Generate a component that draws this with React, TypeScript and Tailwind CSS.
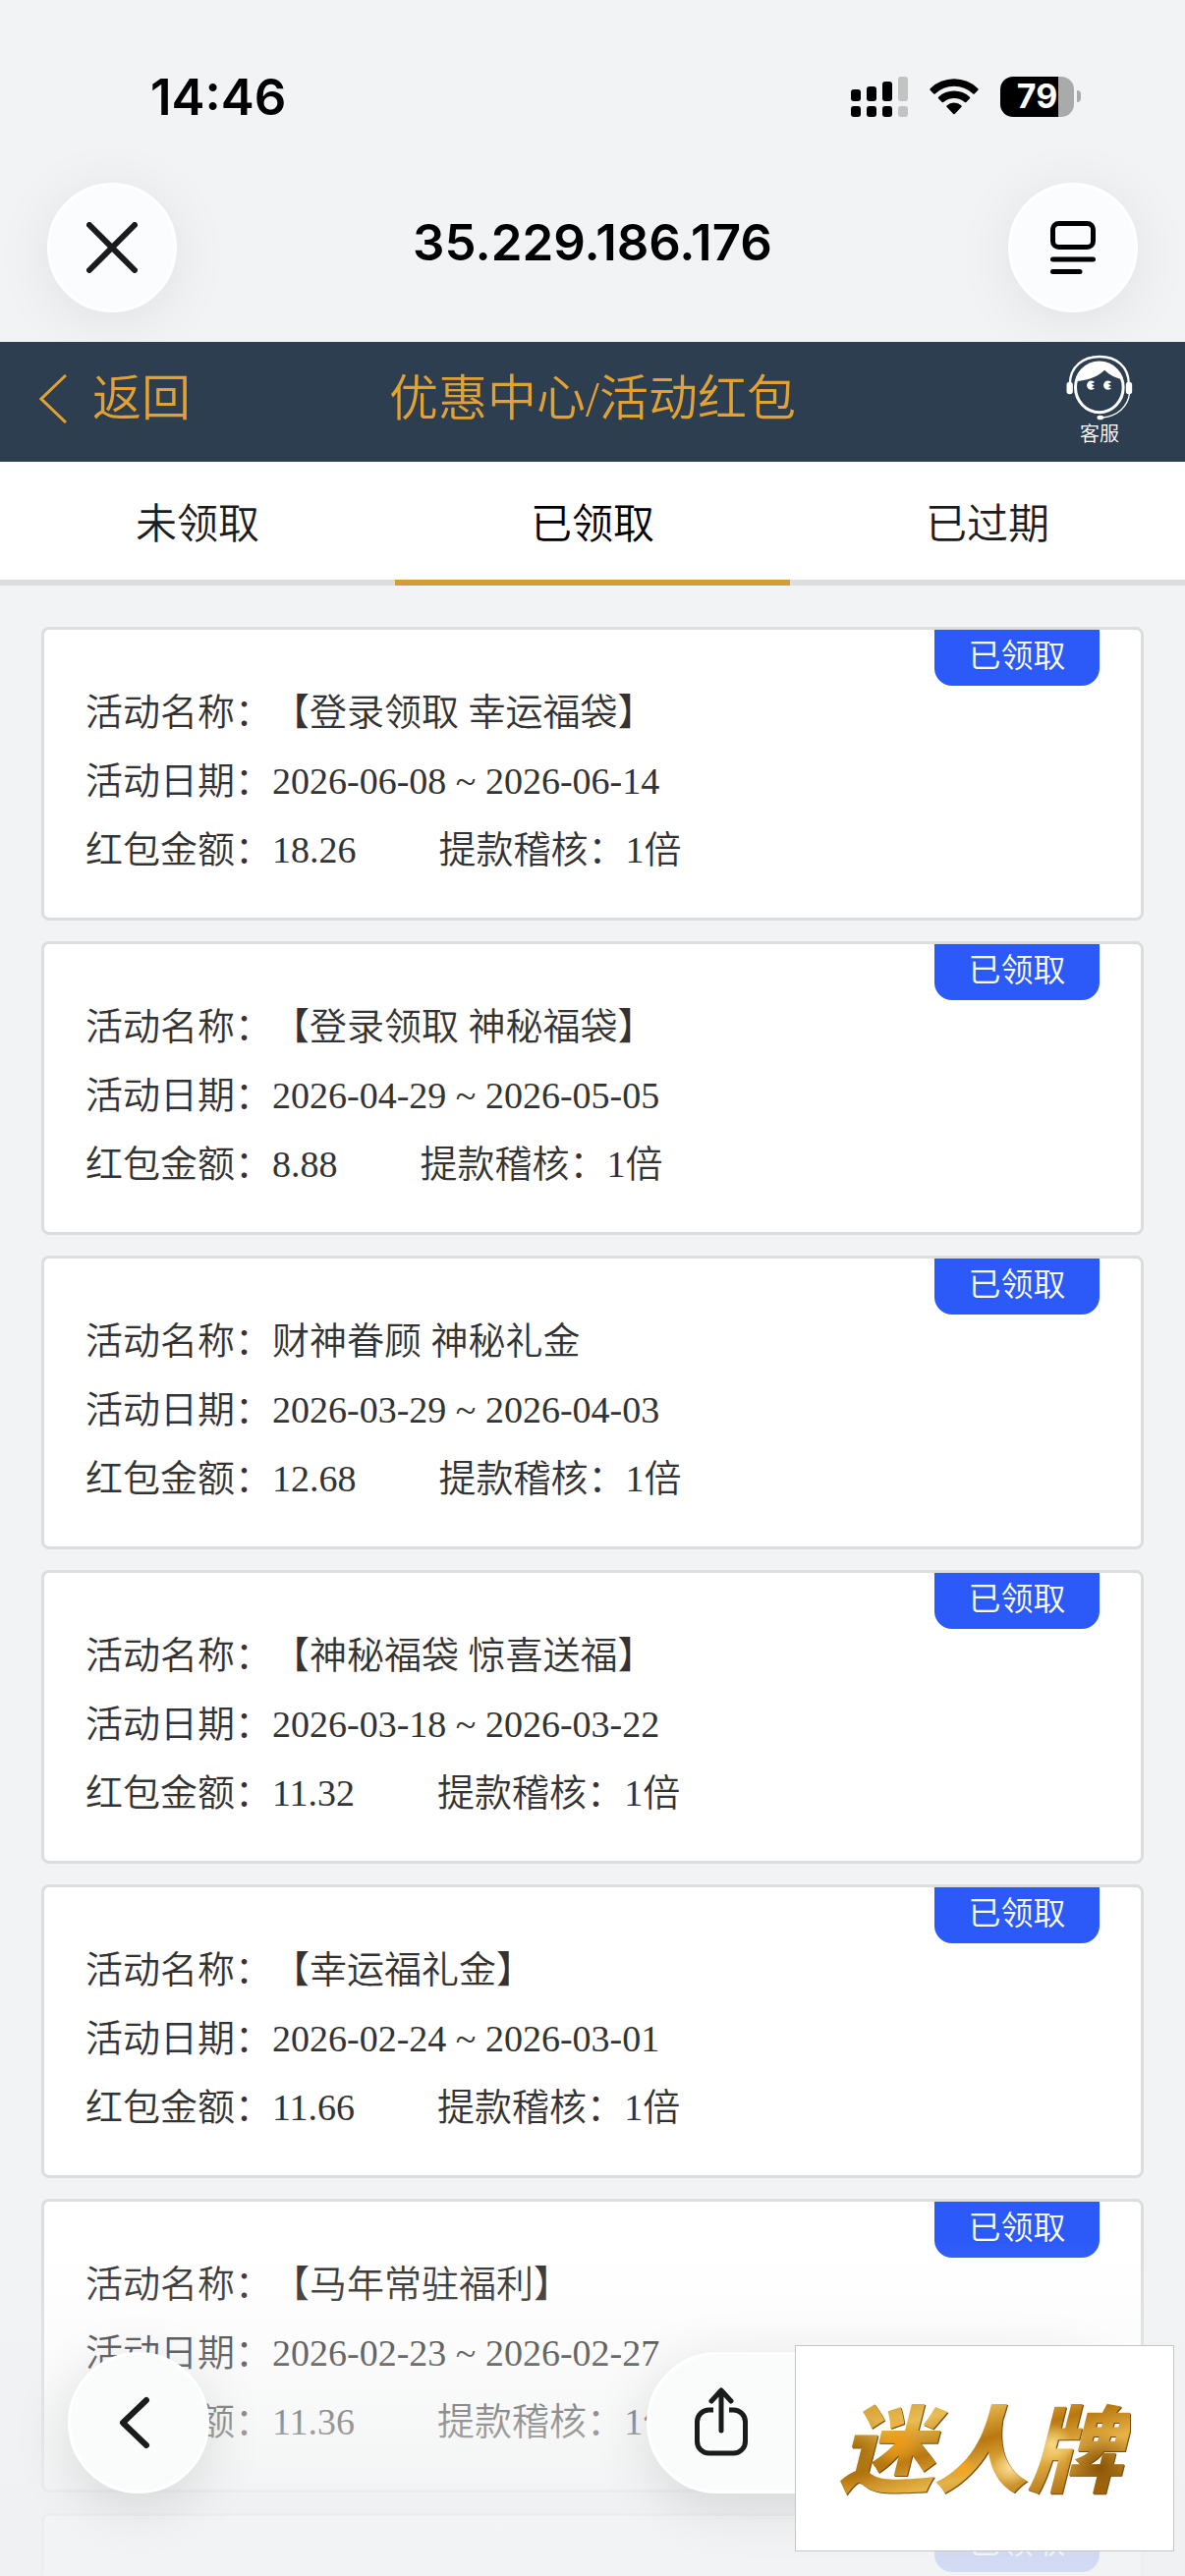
import React from "react";

type Packet = { name: string; date: string; amount: string; audit: string };

const packets: Packet[] = [
  { name: "【登录领取 幸运福袋】", date: "2026-06-08 ~ 2026-06-14", amount: "18.26", audit: "1倍" },
  { name: "【登录领取 神秘福袋】", date: "2026-04-29 ~ 2026-05-05", amount: "8.88", audit: "1倍" },
  { name: "财神眷顾 神秘礼金", date: "2026-03-29 ~ 2026-04-03", amount: "12.68", audit: "1倍" },
  { name: "【神秘福袋 惊喜送福】", date: "2026-03-18 ~ 2026-03-22", amount: "11.32", audit: "1倍" },
  { name: "【幸运福礼金】", date: "2026-02-24 ~ 2026-03-01", amount: "11.66", audit: "1倍" },
  { name: "【马年常驻福利】", date: "2026-02-23 ~ 2026-02-27", amount: "11.36", audit: "1倍" },
];

const tabs = ["未领取", "已领取", "已过期"];

function SignalIcon() {
  return (
    <svg width="58" height="41" viewBox="0 0 58 41" aria-hidden="true">
      <rect x="0" y="13" width="10" height="12" rx="3" />
      <rect x="16" y="10" width="10" height="15" rx="3" />
      <rect x="32" y="5" width="10" height="20" rx="3" />
      <rect x="48" y="0" width="10" height="25" rx="3" fill="#c2c3c3" />
      <rect x="0" y="30" width="10" height="11" rx="3" />
      <rect x="16" y="30" width="10" height="11" rx="3" />
      <rect x="32" y="30" width="10" height="11" rx="3" />
      <rect x="48" y="30" width="10" height="11" rx="3" fill="#c2c3c3" />
    </svg>
  );
}

function WifiIcon() {
  return (
    <svg width="50" height="37" viewBox="0 0 50 37" aria-hidden="true">
      <path d="M0.6 10.2 Q0 11 .6 11.7 L4.3 15.4 Q5 16 5.700 15.400 A28 28 0 0 1 44.300 15.400 Q45 16 45.700 15.400 L49.400 11.700 Q50 11 49.400 10.200 A35 35 0 0 0 .6 10.200Z" />
      <path d="M9 18.700 Q8.400 19.400 9 20.200 L12.700 24 Q13.500 24.600 14.200 24 A16.500 16.500 0 0 1 35.800 24 Q36.500 24.600 37.300 24 L41 20.200 Q41.600 19.400 41 18.700 A23.500 23.500 0 0 0 9 18.700Z" />
      <path d="M17.500 27.400 Q17 28.200 17.600 28.900 L24.300 36 Q25 36.700 25.700 36 L32.400 28.900 Q33 28.200 32.500 27.400 A11 11 0 0 0 17.500 27.400Z" />
    </svg>
  );
}

function Battery() {
  return (
    <div className="flex items-center gap-[3px]">
      <div className="flex h-[41px] w-[75px] items-center justify-center rounded-[13px] bg-[linear-gradient(90deg,#000_79%,#a9aaaa_79%)] text-[34px] leading-none font-bold text-white">
        79
      </div>
      <div className="h-3 w-1 rounded-r-full bg-[#a9aaaa]" />
    </div>
  );
}

function SupportIcon() {
  return (
    <svg width="72" height="68" viewBox="70 46 215 204" fill="none" stroke="#fff" aria-hidden="true">
      <path d="M87 138 C88 84 128 55 178 55 S266 84 267 138" strokeWidth="7" />
      <rect x="77" y="132" width="19" height="38" rx="9" fill="#fff" stroke="none" />
      <rect x="258" y="132" width="19" height="38" rx="9" fill="#fff" stroke="none" />
      <ellipse cx="177" cy="149" rx="73" ry="76" strokeWidth="9" />
      <path d="M104 130 C110 90 142 72 177 72 C213 72 242 92 250 126 C228 120 208 111 193 96 C168 119 139 128 104 130Z" fill="#fff" stroke="none" />
      <path d="M163 133 A14 14 0 1 0 163 152 L153 149 L162 143 L152 138Z" fill="#fff" stroke="none" />
      <path d="M214 133 A14 14 0 1 0 214 152 L204 149 L213 143 L203 138Z" fill="#fff" stroke="none" />
      <path d="M269 168 C264 208 232 236 188 241" strokeWidth="4" />
      <ellipse cx="180" cy="241" rx="10" ry="7" fill="#fff" stroke="none" />
    </svg>
  );
}

function Badge() {
  return (
    <span className="absolute top-0 right-[42px] flex h-[57px] w-[168px] items-center justify-center rounded-b-[18px] bg-[#2c5af9] pb-0.5 text-[33px] leading-none text-white">
      已领取
    </span>
  );
}

function Card({ packet }: { packet?: Packet }) {
  return (
    <li className="relative h-[299px] shrink-0 rounded-lg border-[3px] border-[#dcdddd] bg-white px-[42px] pt-[49px]">
      <Badge />
      {packet && (
        <dl className="text-[38px] leading-[70px] whitespace-nowrap text-[#333]">
          <div className="flex">
            <dt>活动名称：</dt>
            <dd>{packet.name}</dd>
          </div>
          <div className="flex">
            <dt>活动日期：</dt>
            <dd>{packet.date}</dd>
          </div>
          <div className="flex">
            <dt>红包金额：</dt>
            <dd className="mr-[84px]">{packet.amount}</dd>
            <dt>提款稽核：</dt>
            <dd>{packet.audit}</dd>
          </div>
        </dl>
      )}
    </li>
  );
}

export default function App() {
  return (
    <div className="relative flex h-screen flex-col overflow-hidden bg-[#f1f3f4] font-['Liberation_Serif','Noto_Sans_CJK_SC',serif] font-[350]">
      <header className="shrink-0 pt-[66px] font-['Inter',sans-serif] text-black">
        <div className="flex h-16 items-center justify-between pr-[106px] pl-[153px]">
          <time className="text-[51px] leading-none font-semibold">14:46</time>
          <div className="flex items-center gap-[22px]">
            <SignalIcon />
            <WifiIcon />
            <Battery />
          </div>
        </div>
        <div className="flex items-center justify-between px-12 pt-14 pb-[30px]">
          <button aria-label="关闭" className="flex size-[132px] items-center justify-center rounded-full border-[3px] border-white bg-[#fbfcfd] shadow-[0_8px_60px_rgba(0,0,0,0.08)]">
            <svg width="52" height="52" viewBox="0 0 52 52" stroke="#1a1b1c" strokeWidth="6" strokeLinecap="round" aria-hidden="true">
              <path d="M3 3 L49 49 M49 3 L3 49" />
            </svg>
          </button>
          <span className="pb-3 text-[51px] leading-none font-semibold">35.229.186.176</span>
          <button aria-label="阅读模式" className="flex size-[132px] items-center justify-center rounded-full border-[3px] border-white bg-[#fbfcfd] shadow-[0_8px_60px_rgba(0,0,0,0.08)]">
            <svg width="46" height="54" viewBox="0 0 46 54" fill="none" stroke="#000" strokeWidth="5" strokeLinecap="round" aria-hidden="true">
              <rect x="2.500" y="2.500" width="41" height="24" rx="6" />
              <path d="M2.500 39 H43.500 M2.500 51.500 H30" />
            </svg>
          </button>
        </div>
      </header>

      <nav className="grid h-[122px] shrink-0 grid-cols-[1fr_auto_1fr] items-center bg-[#2c3e50] text-[50px] leading-none text-[#e2a233]">
        <button className="flex items-center gap-[26px] justify-self-start pb-1.5 pl-10">
          <svg width="28" height="50" viewBox="0 0 28 50" fill="none" stroke="currentColor" strokeWidth="3" aria-hidden="true">
            <path d="M27 1 L2 25 L27 49" />
          </svg>
          返回
        </button>
        <h1 className="pb-1.5">优惠中心/活动红包</h1>
        <button className="flex flex-col items-center gap-0.5 justify-self-end pr-[51px] pb-1 text-xl leading-6 text-white">
          <SupportIcon />
          客服
        </button>
      </nav>

      <div role="tablist" className="grid shrink-0 grid-cols-3 bg-white text-[42px] text-[#1c1c1c]">
        {tabs.map((tab, i) => (
          <button
            key={tab}
            role="tab"
            aria-selected={i === 1}
            className={i === 1 ? "h-[126px] border-b-6 border-[#d29c3a] pt-2 text-black" : "h-[126px] border-b-6 border-[#ddd] pt-2"}
          >
            {tab}
          </button>
        ))}
      </div>

      <ul className="flex flex-col gap-[21px] px-[42px] pt-[42px]">
        {packets.map((packet) => (
          <Card key={packet.date} packet={packet} />
        ))}
        <Card />
      </ul>

      <div className="pointer-events-none absolute inset-x-0 bottom-0 h-[342px] bg-[linear-gradient(180deg,rgba(240,241,242,0)_0%,rgba(240,241,242,0.07)_13%,rgba(240,241,242,0.27)_34%,rgba(240,241,242,0.55)_57%,rgba(240,241,242,0.8)_76%,rgba(240,241,242,0.86)_100%)]" />

      <footer className="absolute inset-x-0 bottom-[84px] flex items-center justify-between px-[69px]">
        <button aria-label="后退" className="flex size-[144px] items-center justify-center rounded-full border-[3px] border-white bg-[#fafbfb] pr-2 shadow-[0_12px_60px_rgba(0,0,0,0.12)]">
          <svg width="32" height="54" viewBox="0 0 32 54" fill="none" stroke="#1a1b1c" strokeWidth="6" strokeLinecap="round" strokeLinejoin="round" aria-hidden="true">
            <path d="M28 4 L4 27 L28 50" />
          </svg>
        </button>
        <div className="flex h-[144px] w-[479px] items-center rounded-full border-[3px] border-white bg-[#fafbfb] pl-[45px] shadow-[0_12px_60px_rgba(0,0,0,0.12)]">
          <button aria-label="分享" className="pb-0.5">
            <svg width="56" height="70" viewBox="0 0 56 70" fill="none" stroke="#1a1b1c" strokeWidth="5" strokeLinecap="round" strokeLinejoin="round" aria-hidden="true">
              <path d="M20 23 H16 A12 12 0 0 0 3.500 35 V55 A12 12 0 0 0 15.500 67 H40.500 A12 12 0 0 0 52.500 55 V35 A12 12 0 0 0 40 23 H36" strokeLinecap="butt" />
              <path d="M28 44 V4 M18 14 L28 3 L38 14" />
            </svg>
          </button>
        </div>
      </footer>

      <div className="absolute right-[11px] bottom-[25px] flex h-[210px] w-[386px] items-center justify-center border border-[#c6c6c6] bg-white pr-2 pb-2">
        <span className="bg-[radial-gradient(circle_at_22%_48%,#f09a12_0%,transparent_10%),radial-gradient(circle_at_44%_68%,#f8a51c_0%,transparent_7%),radial-gradient(circle_at_60%_68%,#f6dd9b_0%,transparent_9%),radial-gradient(circle_at_74%_50%,#f7da87_0%,transparent_9%),radial-gradient(circle_at_90%_68%,#8a5508_0%,transparent_13%),radial-gradient(circle_at_8%_55%,#a36a08_0%,transparent_13%),linear-gradient(165deg,#c98d1e_8%,#e9bd55_30%,#b9780f_48%,#e6b347_64%,#a9690c_88%)] bg-clip-text px-2 font-['Noto_Sans_CJK_SC',sans-serif] text-[96px] leading-[130px] font-black text-transparent italic drop-shadow-[1px_1px_0_#7a4a10]">
          迷人牌
        </span>
      </div>
    </div>
  );
}
